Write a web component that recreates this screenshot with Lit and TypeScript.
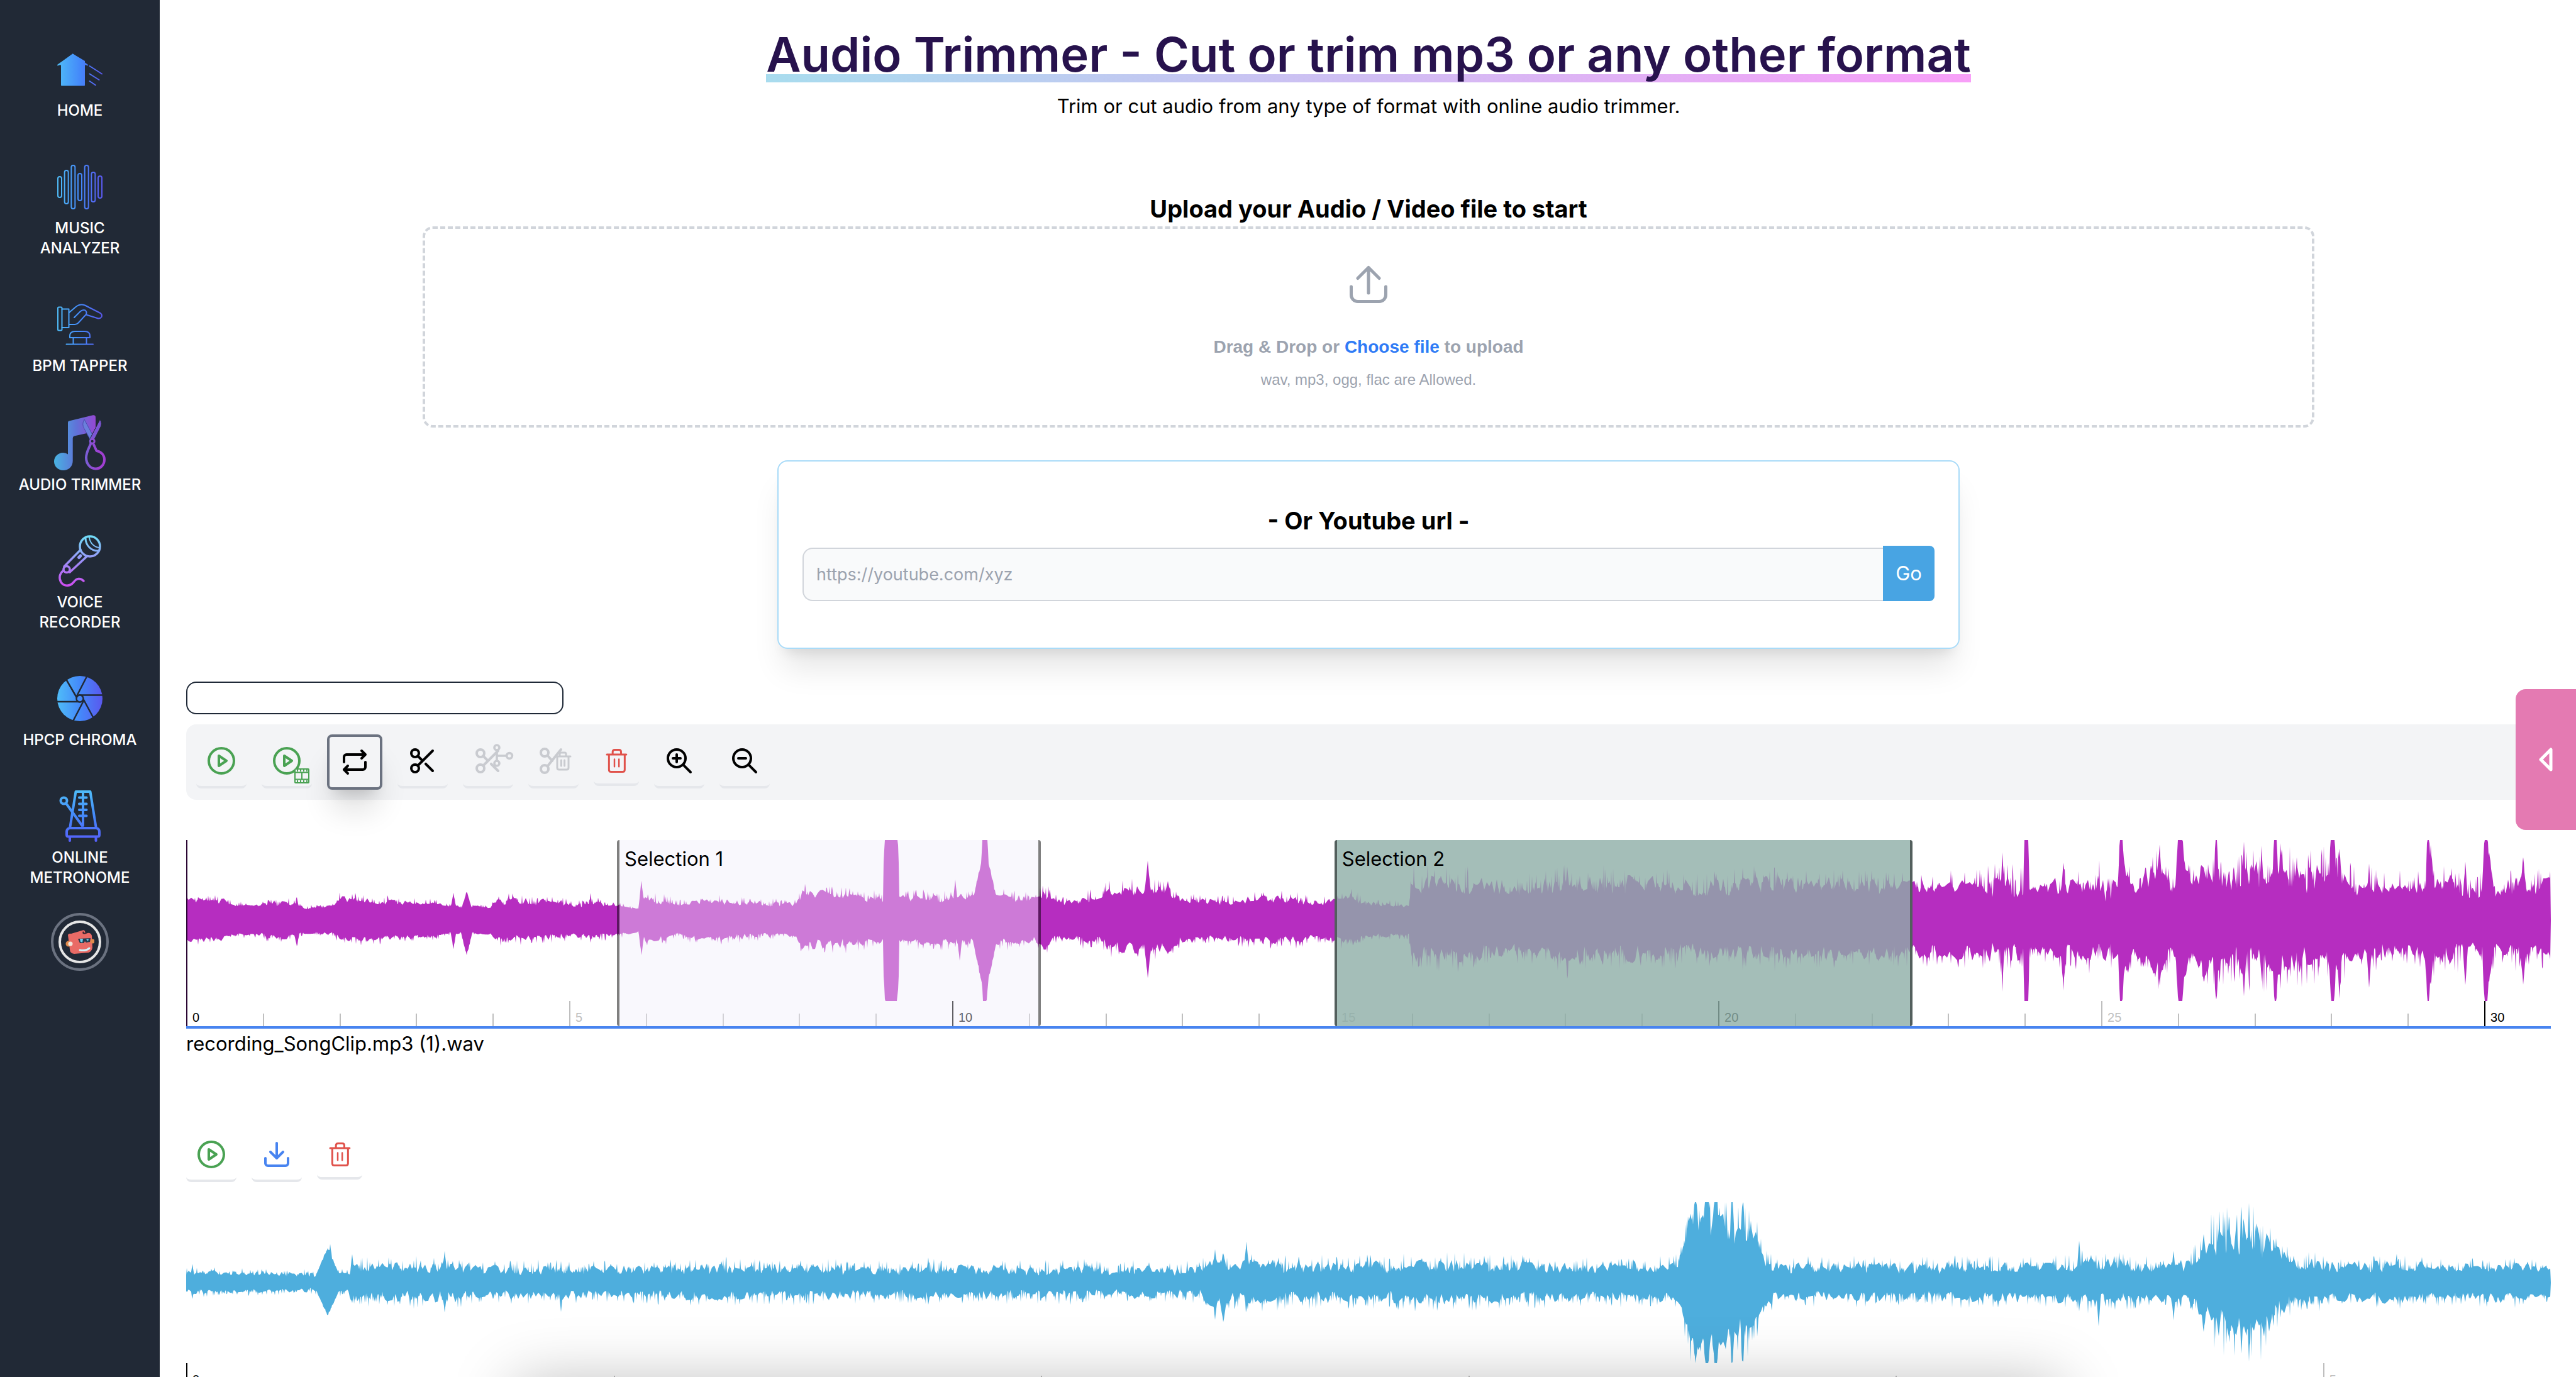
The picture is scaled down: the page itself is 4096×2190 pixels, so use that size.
import { LitElement, html, svg, css, nothing } from "lit";
import { customElement, property } from "lit/decorators.js";
import { classMap } from "lit/directives/class-map.js";

/* ---------- waveform data ---------- */

// [position, quiet level, peak level] on a 3760 x 256 grid, levels measured from the centre line
type Level = [number, number, number];
// [position, half width, height above centre, height below centre]
type Spike = [number, number, number, number];

interface Track {
  levels: Level[];
  spikes: Spike[];
  seed: number;
}

const GRID = 3760;
const HALF = 128;

const songTrack: Track = {
  seed: 11,
  levels: [
    [0, 28, 44], [60, 26, 40], [76, 21, 31], [120, 21, 29], [130, 23, 38], [176, 22, 36], [186, 18, 25],
    [236, 20, 28], [244, 27, 46], [320, 25, 40], [400, 23, 34], [420, 19, 28], [484, 19, 27], [492, 24, 44],
    [560, 24, 42], [620, 21, 34], [640, 22, 38], [676, 21, 34], [720, 16, 22], [730, 26, 46], [760, 24, 44],
    [780, 20, 34], [830, 26, 42], [900, 21, 38], [970, 20, 34], [975, 32, 60], [1040, 30, 58], [1110, 26, 46],
    [1140, 28, 48], [1215, 28, 52], [1254, 30, 48], [1290, 30, 54], [1350, 27, 44], [1366, 34, 62],
    [1380, 25, 42], [1418, 24, 36], [1426, 27, 52], [1456, 26, 46], [1464, 32, 66], [1520, 38, 68],
    [1562, 38, 64], [1580, 27, 46], [1640, 24, 40], [1700, 26, 48], [1770, 26, 48], [1790, 22, 36],
    [1826, 26, 44], [1850, 28, 54], [1880, 22, 36], [1944, 20, 32], [1949, 42, 90], [2040, 40, 88],
    [2120, 38, 74], [2200, 42, 94], [2330, 40, 88], [2410, 38, 78], [2520, 42, 90], [2600, 44, 84],
    [2743, 40, 78], [2800, 42, 80], [2860, 42, 84], [2880, 34, 98], [2915, 34, 90], [2938, 42, 60],
    [2970, 40, 84], [3015, 38, 86], [3045, 30, 98], [3072, 30, 86], [3088, 60, 104], [3098, 40, 60],
    [3110, 44, 106], [3138, 58, 128], [3158, 44, 64], [3172, 68, 128], [3190, 50, 84], [3210, 58, 126],
    [3240, 44, 110], [3270, 42, 118], [3300, 44, 124], [3320, 48, 118], [3345, 48, 122], [3370, 42, 112],
    [3400, 44, 120], [3424, 50, 110], [3450, 40, 88], [3500, 40, 84], [3555, 40, 80], [3575, 42, 98],
    [3600, 38, 96], [3625, 36, 80], [3640, 32, 66], [3666, 42, 98], [3676, 34, 64], [3700, 36, 90],
    [3730, 38, 82], [3760, 40, 88],
  ],
  spikes: [
    [176, 8, 38, 44], [425, 8, 46, 46], [446, 14, 48, 58], [643, 5, 46, 36], [724, 7, 66, 58], [1027, 8, 58, 44],
    [1121, 13, 240, 220], [1223, 7, 66, 44], [1230, 7, 42, 68], [1270, 26, 127, 127], [1270, 7, 180, 150],
    [1529, 10, 96, 95], [1561, 14, 66, 54], [2196, 7, 90, 94], [2888, 5, 114, 114], [2926, 5, 180, 180],
    [2985, 8, 96, 112], [3077, 5, 160, 150], [3080, 14, 110, 96], [3138, 7, 127, 112], [3171, 8, 160, 150],
    [3171, 16, 120, 112], [3228, 4, 140, 134], [3272, 7, 126, 126], [3300, 6, 124, 100], [3322, 5, 150, 140],
    [3322, 14, 118, 90], [3330, 6, 126, 110], [3413, 6, 170, 150], [3424, 7, 122, 126], [3471, 7, 92, 114],
    [3565, 4, 150, 150], [3569, 10, 122, 110], [3624, 7, 94, 106], [3657, 6, 160, 150], [3662, 14, 112, 100],
    [3716, 10, 104, 102],
  ],
};

const clipTrack: Track = {
  seed: 47,
  levels: [
    [0, 11, 26], [120, 11, 22], [205, 8, 22], [236, 13, 24], [258, 11, 22], [262, 13, 42], [420, 13, 46],
    [470, 12, 38], [700, 12, 36], [860, 13, 42], [1000, 12, 38], [1200, 12, 38], [1400, 11, 38], [1614, 11, 36],
    [1626, 16, 56], [1700, 16, 50], [1820, 14, 44], [1960, 14, 50], [2100, 14, 46], [2204, 14, 42],
    [2366, 15, 44], [2378, 28, 60], [2384, 58, 100], [2392, 74, 136], [2446, 66, 138], [2460, 44, 136],
    [2484, 48, 128], [2500, 36, 100], [2510, 22, 54], [2530, 14, 42], [2800, 14, 44], [2960, 15, 44],
    [3010, 17, 54], [3080, 17, 50], [3130, 13, 40], [3180, 17, 48], [3204, 30, 72], [3222, 36, 116],
    [3254, 34, 130], [3300, 32, 134], [3318, 32, 102], [3340, 22, 70], [3356, 17, 56], [3400, 15, 48],
    [3520, 16, 46], [3620, 16, 38], [3690, 17, 46], [3760, 16, 34],
  ],
  spikes: [
    [10, 5, 30, 26], [225, 24, 58, 54], [229, 8, 64, 46], [264, 5, 48, 34], [411, 6, 52, 48], [596, 5, 32, 48],
    [1180, 5, 40, 36], [1636, 7, 54, 60], [1649, 10, 50, 66], [1686, 7, 66, 44], [2400, 6, 140, 130],
    [2418, 7, 160, 150], [2432, 7, 150, 140], [2458, 4, 140, 136], [2475, 4, 136, 134], [3010, 5, 70, 46],
    [3041, 5, 40, 70], [3160, 5, 54, 62], [3208, 10, 78, 80], [3268, 5, 124, 120], [3280, 5, 127, 127],
  ],
};

function noise(seed: number): () => number {
  let s = seed * 7919;
  return () => {
    s = (s * 1664525 + 1013904223) % 4294967296;
    return s / 4294967296;
  };
}

const CREST = 4;

function edge(track: Track, side: 2 | 3): number[] {
  const rand = noise(track.seed + side);
  const gain = side === 2 ? 1 : 0.94;
  const out: number[] = [];
  let k = 0;
  let from = rand();
  let to = rand();
  for (let x = 0; x < GRID; x++) {
    while (k < track.levels.length - 2 && track.levels[k + 1][0] <= x) k++;
    if (x % CREST === 0) {
      from = to;
      to = rand();
    }
    const [x0, lo0, hi0] = track.levels[k];
    const [x1, lo1, hi1] = track.levels[k + 1];
    const t = (x - x0) / (x1 - x0);
    const lo = lo0 + (lo1 - lo0) * t;
    const hi = hi0 + (hi1 - hi0) * t;
    const r = rand();
    const crest = 0.65 * (from + ((to - from) * (x % CREST)) / CREST);
    let v = (lo + (hi - lo) * Math.max(crest, r * r * r * r)) * gain;
    for (const spike of track.spikes) {
      const d = Math.abs(x - spike[0]) / spike[1];
      const fall = spike[side] > HALF ? 1 - d * d * 0.7 : 1 - d;
      if (d < 1) v = Math.max(v, spike[side] * fall * (0.92 + r * 0.08));
    }
    out.push(Math.min(v, HALF));
  }
  return out;
}

function wavePath(track: Track): string {
  const up = edge(track, 2).map((v, x) => `${x} ${(HALF - v).toFixed(1)}`);
  const down = edge(track, 3).map((v, x) => `${x} ${(HALF + v).toFixed(1)}`).reverse();
  return `M0 ${HALF}L${up.join("L")}L${GRID} ${HALF}L${down.join("L")}Z`;
}

/* ---------- icons ---------- */

const sideGradient = (id: string, stops: string[], vertical = false) => svg`
  <defs>
    <linearGradient id=${id} gradientUnits="userSpaceOnUse" x1="0" y1="0" x2=${vertical ? 0 : 72} y2=${vertical ? 80 : 0}>
      ${stops.map((c, i) => svg`<stop offset=${i / (stops.length - 1)} stop-color=${c}></stop>`)}
    </linearGradient>
  </defs>`;
const blues = ["#4fbcf8", "#4489fa", "#5a58ee"];

const homeIcon = html`<svg class="icon" viewBox="0 0 72 72" width="72" height="72" aria-hidden="true">
  ${sideGradient("g-home", blues)}
  <g fill="url(#g-home)" stroke="url(#g-home)" stroke-width="2" stroke-linecap="round" stroke-linejoin="round">
    <path stroke="none" d="M6 27 24.700 11.500 44 23V61.500a1 1 0 0 1-1 1H7a1 1 0 0 1-1-1Z"></path>
    <path d="M1 29.500 24.700 12.500 48 29.500Z" fill="url(#g-home)" stroke="none"></path>
    <path fill="none" d="M1 29.500 24.700 12.500 48 29.500M51.500 31 71 43.500M51.500 43.500 66.500 53M51.500 55 61 61.500"></path>
  </g>
</svg>`;

const bars: [number, number][] = [[20, 53], [10, 63], [2, 71], [15, 58], [2, 71], [13, 60], [19, 54]];
const analyzerIcon = html`<svg class="icon" viewBox="0 0 72 72" width="72" height="72" aria-hidden="true">
  ${sideGradient("g-bars", blues)}
  <g fill="none" stroke="url(#g-bars)" stroke-width="2">
    ${bars.map(([a, b], i) => svg`<rect x=${1 + i * 10.67} y=${a} width="6" height=${b - a} rx="3"></rect>`)}
  </g>
</svg>`;

const tapperIcon = html`<svg class="icon" viewBox="0 0 72 72" width="72" height="72" aria-hidden="true">
  ${sideGradient("g-tap", blues)}
  <g fill="none" stroke="url(#g-tap)" stroke-width="2" stroke-linecap="round" stroke-linejoin="round">
    <rect x="1" y="8.500" width="6.500" height="37" rx="1.500"></rect>
    <path d="M7.500 11.500H18.500V41H7.500"></path>
    <path d="M19 17 29 8.500Q36 2.500 44 5.500L68.500 18Q72 20.500 70.500 24 68 27.500 63.500 26L46 20.500"></path>
    <path d="M27 25 36.500 15.500Q40.500 12 44.500 13.500 48 16.500 45.500 20.500L33.500 33.500Q31 36 28 36H19"></path>
    <path d="M20 57V54.500Q20 47 28 47H44Q52 47 52 54.500V57ZM25.500 57V67M46.500 57V67M14.500 67.500H57"></path>
  </g>
</svg>`;

const trimmerIcon = html`<svg class="icon" viewBox="0 0 82 88" width="82" height="88" aria-hidden="true">
  ${sideGradient("g-trim", ["#48b3e2", "#6072d8", "#a03fd2"])}
  <path fill="url(#g-trim)" d="M22 12Q22 10 24 9.600L62 .3Q66 0 66 4V25L61 30 52 29 32 33.500Q29.700 34 29.700 37V73C29.700 82 23 88 14.500 88 6 88 0 81.500 0 74S6 60 14.500 60Q19 60 22 62.500Z"></path>
  <path fill="#6b7fdc" stroke="#4a4fae" stroke-width="1" d="M48 7Q43.500 15 48 22L58 40 64 37Z"></path>
  <path fill="#7c55d4" stroke="#212936" stroke-width="1" d="M73 7Q77.500 14 73 21L63.500 40 57.500 37Z"></path>
  <g fill="none" stroke="url(#g-trim)" stroke-width="4" stroke-linejoin="round">
    <path d="M58.500 45C56 52 51 59 51 68 51 78 58 85.500 66 85.500S80 79 80 71 74 58 67.500 57L62.500 46"></path>
    <circle cx="60.700" cy="41.700" r="3.500" stroke-width="3" fill="#212936"></circle>
  </g>
</svg>`;

const micIcon = html`<svg class="icon" viewBox="0 0 68 82" width="68" height="82" aria-hidden="true">
  ${sideGradient("g-mic", ["#6fe0f8", "#9a92f8", "#cc4ef0"], true)}
  <g fill="none" stroke="url(#g-mic)" stroke-width="3.500" stroke-linecap="round" stroke-linejoin="round">
    <circle cx="50" cy="18" r="16"></circle>
    <path d="M43 5C43 16 52 26 64 25" stroke-width="3"></path>
    <path d="M49 4C50 12 56 19 65 20" stroke-width="2"></path>
    <path d="M35 23.500 9 50M45.500 33.500 18 59"></path>
    <circle cx="13" cy="54.500" r="5"></circle>
    <path d="M32.500 35.500 35 33" stroke-width="5"></path>
    <path d="M8 56C2 61 0 68 4 75 9 82 18 82 24 75 29 68 35 68 40 73"></path>
  </g>
</svg>`;

const chromaIcon = html`<svg class="icon" viewBox="0 0 72 72" width="72" height="72" aria-hidden="true">
  ${sideGradient("g-chroma", blues)}
  <circle cx="36" cy="36" r="36" fill="url(#g-chroma)"></circle>
  <g stroke="#212936" stroke-width="2.500" fill="none">
    <path d="M14.500 6 31 34.500M47.500 0 30.500 33M73 30.500H34M58 67.500 41 36M25 72 42.500 38.500M-1 41H38"></path>
    <circle cx="36" cy="36" r="5.500" fill="url(#g-chroma)"></circle>
  </g>
</svg>`;

const metronomeIcon = html`<svg class="icon" viewBox="0 0 66 82" width="66" height="82" aria-hidden="true">
  ${sideGradient("g-metro", ["#4fbcf8", "#4489fa", "#5560f8"], true)}
  <g fill="none" stroke="url(#g-metro)" stroke-width="4" stroke-linejoin="round" stroke-linecap="round">
    <path d="M17.500 58 26.500 2H49.500L58.500 58M38 3V56M12 22 36.500 56"></path>
    <path d="M32 11.500H43.500M32 21.500H43.500M32 31H43.500M32 40.500H43.500"></path>
    <path d="M17 60H59Q64 61 64 66V71Q64 73.500 61 73.500H15Q12 73.500 12 71V66Q12 61 17 60ZM17 75V80M58.500 75V80"></path>
    <circle cx="7.500" cy="16.500" r="5"></circle>
  </g>
</svg>`;

const avatarArt = html`<svg viewBox="0 0 46 38" width="46" height="38" aria-hidden="true">
  <path fill="#e96b66" d="M4 8Q5 5 9 6L26 1Q30-1 31 2 32 7 35 5 40 4 42 9L43 28Q42 34 37 36L14 38Q7 37 7 31Z"></path>
  <circle cx="5" cy="22" r="4.500" fill="#e28b4c"></circle>
  <circle cx="8" cy="22" r="3.500" fill="#f2e5dc"></circle>
  <circle cx="43" cy="18" r="3.500" fill="#e28b4c"></circle>
  <path fill="#263a4d" d="M20 14 40 13 39 19 33 20 31 18 29 21 23 21Z"></path>
  <path fill="#6fd0ee" d="M23 14 28 14 27 20 24 19ZM33 15 37 14 36 18Z"></path>
  <path fill="#3b2430" d="M27 5Q30 8 34 5L33 2 31 5 28 2Z"></path>
  <path fill="none" stroke="#d5f3fb" stroke-width="3" stroke-linecap="round" d="M23 32Q32 34 38 29"></path>
</svg>`;

const glyph = (body: unknown, size = 48) => html`<svg class="icon" viewBox="0 0 24 24" width=${size} height=${size}
  fill="none" stroke="currentColor" stroke-width="2" stroke-linecap="round" stroke-linejoin="round" aria-hidden="true">${body}</svg>`;

const playBody = svg`<circle cx="12" cy="12" r="10"></circle><path d="M10 8 16 12 10 16Z"></path>`;
const scissorsBody = svg`<circle cx="6" cy="6" r="3"></circle><circle cx="6" cy="18" r="3"></circle>`;
const playIcon = glyph(playBody);
const repeatIcon = glyph(svg`<path d="M3.500 12V8A2 2 0 0 1 5.500 6H20M17.500 3 20.500 6 17.500 9M20.500 12V16A2 2 0 0 1 18.500 18H4M6.500 15 3.500 18 6.500 21"></path>`);
const cutIcon = glyph(svg`${scissorsBody}<path d="M20 4 8.120 15.880M14.470 14.480 20 20M8.120 8.120 12 12"></path>`);
const splitIcon = glyph(svg`${scissorsBody}<path d="M20 4 8.120 15.880M14.470 14.480 20 20M8.120 8.120 12 12"></path>
  <g stroke-width="1.800"><circle cx="19" cy="1.500" r="2"></circle><circle cx="29" cy="8" r="2.200"></circle><circle cx="19" cy="14" r="2"></circle><path d="M19 3.500V12M20 8H26.800"></path></g>`);
const cutDeleteIcon = glyph(svg`<circle cx="5" cy="5.500" r="3"></circle><circle cx="5" cy="18.500" r="3"></circle><path d="M18 3 7.500 16M7.500 8 11 12"></path>
  <g stroke-width="1.500"><path d="M13.500 8.500H25.500M15 9V17.500Q15 19 16.500 19H22.500Q24 19 24 17.500V9M17 8V6.500Q17 5.500 18 5.500H21Q22 5.500 22 6.500V8M18.200 11.500V16M20.800 11.500V16"></path></g>`);
const trashIcon = glyph(svg`<path stroke-width="1.800" d="M3 6H21.500M5 6V20.500Q5 22.500 7 22.500H18Q20 22.500 20 20.500V6M8.500 6V3.500Q8.500 1.500 10.500 1.500H14.500Q16.500 1.500 16.500 3.500V6"></path><path stroke-width="1.500" d="M10.200 10.500V17.500M14.500 10.500V17.500"></path>`, 40);
const zoomInIcon = glyph(svg`<circle cx="10" cy="10" r="7"></circle><path d="M15.200 15.200 21 21M7 10H13M10 7V13"></path>`);
const zoomOutIcon = glyph(svg`<circle cx="10" cy="10" r="7"></circle><path d="M15.200 15.200 21 21M7 10H13"></path>`);
const downloadIcon = glyph(svg`<path d="M12 3V14.500M7 10 12 15 17 10M3 15V19A2 2 0 0 0 5 21H19A2 2 0 0 0 21 19V15"></path>`);
const filmBadge = html`<svg class="badge" viewBox="0 0 24 24" width="24" height="24" fill="none" stroke="currentColor" stroke-width="2" aria-hidden="true">
  <rect x="1" y="1" width="22" height="22" rx="1"></rect>
  <path d="M1 6.500H23M1 17.500H23M12 6V18"></path>
  <path d="M4 3.500H22M4 20.500H22" stroke-width="3" stroke-dasharray="2 3"></path>
</svg>`;

/* ---------- waveform element ---------- */

interface Region {
  label: string;
  from: number;
  to: number;
  tone: "light" | "sage";
}

@customElement("wave-track")
export class WaveTrack extends LitElement {
  @property({ attribute: false }) track: Track = songTrack;
  @property({ attribute: false }) regions: Region[] = [];
  @property({ type: Number }) duration = 30;
  @property({ type: Boolean }) cursor = false;

  static styles = css`
    :host { display: block; position: relative; }
    .wave { display: block; width: 100%; height: 256px; fill: currentColor; }
    .ruler { position: relative; height: 40px; overflow: hidden; }
    .tick {
      position: absolute; bottom: 0; height: 20px; border-left: 2px solid #bfbfbf;
      box-sizing: border-box; color: #bfbfbf;
      font: 20px/24px "Liberation Sans", Arial, sans-serif;
    }
    .tick.labelled { height: 40px; padding: 14px 0 0 8px; }
    .tick.main { border-color: #000; color: #000; }
    .cursor { position: absolute; left: 0; top: 0; bottom: 0; width: 2px; background: #2b0633; }
    .region {
      position: absolute; top: 0; bottom: 0; box-sizing: border-box; padding: 6px 8px;
      border: solid rgba(0, 0, 0, 0.5); border-width: 0 4px; border-radius: 4px;
      background-clip: padding-box; color: #000; font-size: 31px; line-height: 48px;
    }
    .light { background-color: rgba(240, 238, 250, 0.4); }
    .sage { background-color: rgba(141, 174, 166, 0.8); border-color: #535f5d; }
  `;

  render() {
    const seconds = Array.from({ length: Math.floor(this.duration) + 1 }, (_, i) => i);
    const pct = (t: number) => `${(t / this.duration) * 100}%`;
    return html`
      <svg class="wave" viewBox="0 0 ${GRID} ${HALF * 2}" preserveAspectRatio="none" role="img" aria-label="Waveform">
        <path d=${wavePath(this.track)}></path>
      </svg>
      <div class="ruler">
        ${seconds.map((s) => html`<span
          class=${classMap({ tick: true, labelled: s % 5 === 0, main: s % 10 === 0 })}
          style="left:${pct(s)}">${s % 5 === 0 ? s : nothing}</span>`)}
      </div>
      ${this.cursor ? html`<div class="cursor"></div>` : nothing}
      ${this.regions.map((r) => html`<div class="region ${r.tone}"
        style="left:${pct(r.from)};width:${pct(r.to - r.from)}">${r.label}</div>`)}
    `;
  }
}

/* ---------- page ---------- */

const navItems = [
  { label: "HOME", icon: homeIcon, cls: "" },
  { label: "MUSIC ANALYZER", icon: analyzerIcon, cls: "stacked" },
  { label: "BPM TAPPER", icon: tapperIcon, cls: "" },
  { label: "AUDIO TRIMMER", icon: trimmerIcon, cls: "tall" },
  { label: "VOICE RECORDER", icon: micIcon, cls: "stacked" },
  { label: "HPCP CHROMA", icon: chromaIcon, cls: "" },
  { label: "ONLINE METRONOME", icon: metronomeIcon, cls: "stacked" },
];

const tools = [
  { label: "Play", icon: playIcon, cls: "green" },
  { label: "Play selection", icon: html`${playIcon}${filmBadge}`, cls: "green" },
  { label: "Loop", icon: repeatIcon, cls: "active" },
  { label: "Cut", icon: cutIcon, cls: "" },
  { label: "Split", icon: splitIcon, cls: "off" },
  { label: "Cut and delete", icon: cutDeleteIcon, cls: "off" },
  { label: "Delete", icon: trashIcon, cls: "red" },
  { label: "Zoom in", icon: zoomInIcon, cls: "" },
  { label: "Zoom out", icon: zoomOutIcon, cls: "" },
];

const clipTools = [
  { label: "Play clip", icon: playIcon, cls: "green" },
  { label: "Download clip", icon: downloadIcon, cls: "blue" },
  { label: "Delete clip", icon: trashIcon, cls: "red" },
];

const selections: Region[] = [
  { label: "Selection 1", from: 5.624, to: 11.157, tone: "light" },
  { label: "Selection 2", from: 14.99, to: 22.54, tone: "sage" },
];

@customElement("app-root")
export class AppRoot extends LitElement {
  static styles = css`
    :host { display: block; font-family: Inter, "Liberation Sans", sans-serif; font-size: 31px; line-height: 48px; color: #000; }
    * { box-sizing: border-box; }
    .shell { position: relative; display: flex; height: 100vh; overflow: hidden; background: #fff; }
    .sidebar { flex: none; width: 254px; padding-top: 74px; background: #212936; display: flex; flex-direction: column; align-items: center; }
    .nav { display: flex; flex-direction: column; align-items: center; gap: 69px; }
    .nav-link { display: flex; flex-direction: column; align-items: center; gap: 14px; width: 200px; color: #fff; text-decoration: none; text-align: center; font-size: 24px; font-weight: 500; line-height: 32px; }
    .nav-art { display: flex; align-items: center; justify-content: center; height: 72px; }
    .tall .nav-art { height: 74px; }
    .nav-text { white-space: nowrap; }
    .stacked .nav-text { width: min-content; white-space: normal; }
    .nav-link .icon { flex: none; overflow: visible; }
    .avatar { flex: none; margin-top: 40px; width: 92px; height: 92px; padding: 8px; border: 4px solid #6b7280; border-radius: 50%; background: none; }
    .avatar-ring { display: flex; align-items: center; justify-content: center; width: 68px; height: 68px; margin: auto; border: 4px solid #e5e5e5; border-radius: 50%; }
    .main { flex: 1; min-width: 0; padding: 37px 40px 0 42px; display: flex; flex-direction: column; }
    .main > * { flex: none; }
    h1, h2, p { margin: 0; text-align: center; }
    h1 { font-size: 76px; line-height: 98px; font-weight: 600; color: #27124d; }
    .underlined { background: linear-gradient(120deg, #a8dcee 0%, #f89ff8 100%) no-repeat 0 calc(100% - 1px) / 100% 13px; }
    .lead { margin-top: 10px; }
    h2 { font-size: 38px; line-height: 56px; font-weight: 700; }
    .upload-title { margin-top: 111px; }
    .drop { align-self: center; width: 80%; padding: 58px 0 56px; border: 4px dashed #d1d5db; border-radius: 16px; display: flex; flex-direction: column; align-items: center; color: #9ca3af; font-family: "Liberation Sans", Arial, sans-serif; }
    .drop-line { margin-top: 50px; font-size: 28px; line-height: 40px; font-weight: 700; }
    .choose { color: #2f7bf6; cursor: pointer; }
    .file { position: absolute; width: 1px; height: 1px; opacity: 0; }
    .hint { margin-top: 16px; font-size: 24px; line-height: 32px; }
    .card { align-self: center; width: 50%; margin-top: 52px; padding: 66px 38px 74px; border: 2px solid #a9dbf8; border-radius: 16px; box-shadow: 0 40px 50px -10px rgba(0, 0, 0, 0.1), 0 16px 20px -12px rgba(0, 0, 0, 0.1); }
    .url-row { display: flex; align-items: flex-end; margin-top: 12px; }
    .url { flex: 1; min-width: 0; height: 85px; padding: 0 20px; border: 2px solid #d1d5db; border-right: 0; border-radius: 16px 0 0 16px; background: #f9fafb; font: 27px/40px Inter, sans-serif; }
    .url::placeholder { color: #9ca3af; opacity: 1; }
    .go { width: 82px; height: 88px; padding: 0; border: 0; border-radius: 0 8px 8px 0; background: #48a4e3; color: #fff; font: 31px/48px Inter, sans-serif; }
    .name { width: 600px; max-width: 100%; height: 52px; margin-top: 52px; padding: 0 16px; border: 2px solid #1f2937; border-radius: 16px; background: #fff; font: 27px/40px Inter, sans-serif; }
    .toolbar { display: flex; align-items: center; gap: 24px; }
    .editor-tools { margin-top: 16px; padding: 16px; min-height: 120px; border-radius: 16px; background: #f3f4f6; }
    .clip-tools { margin-top: 112px; }
    .tool { position: relative; display: block; padding: 16px; border: 0 solid #e5e7eb; border-bottom-width: 4px; border-radius: 8px; background: none; color: #000; }
    .tool .icon { display: block; overflow: visible; }
    .tool.green { color: #4aa253; }
    .tool.red { color: #e0524b; }
    .tool.blue { color: #4884f0; }
    .tool.off { color: #c9cbd0; }
    .tool.active { border: 4px solid #6b7280; box-shadow: 0 40px 50px -10px rgba(0, 0, 0, 0.14), 0 16px 20px -12px rgba(0, 0, 0, 0.14); }
    .badge { position: absolute; right: 4px; bottom: 4px; background: #f3f4f6; }
    .song { margin-top: 64px; color: #b62dc0; border-bottom: 4px solid #4884f0; }
    .clip { margin-top: 32px; color: #4eaedd; }
    .drawer { position: absolute; right: 0; top: 1096px; width: 96px; height: 224px; padding: 0; border: 0; border-radius: 16px 0 0 16px; background: #e47ab2; color: #fff; }
    .drawer svg { display: block; margin: auto; }
    .dock-shadow { position: absolute; left: 20%; right: 20%; bottom: -110px; height: 100px; pointer-events: none; box-shadow: 0 0 100px rgba(0, 0, 0, 0.28); }
  `;

  private renderTool = (t: { label: string; icon: unknown; cls: string }) => html`
    <button class="tool ${t.cls}" type="button" aria-label=${t.label} ?disabled=${t.cls === "off"}>${t.icon}</button>`;

  render() {
    return html`
      <div class="shell">
        <aside class="sidebar">
          <nav class="nav">
            ${navItems.map((n) => html`<a class="nav-link ${n.cls}" href="#">
              <span class="nav-art">${n.icon}</span>
              <span class="nav-text">${n.label}</span>
            </a>`)}
          </nav>
          <button class="avatar" type="button" aria-label="Account"><span class="avatar-ring">${avatarArt}</span></button>
        </aside>
        <main class="main">
          <h1><span class="underlined">Audio Trimmer - Cut or trim mp3 or any other format</span></h1>
          <p class="lead">Trim or cut audio from any type of format with online audio trimmer.</p>
          <h2 class="upload-title">Upload your Audio / Video file to start</h2>
          <div class="drop">
            <svg viewBox="0 0 60 60" width="60" height="60" fill="none" stroke="currentColor" stroke-width="5" stroke-linecap="round" stroke-linejoin="round" aria-hidden="true">
              <path d="M2.500 34V47A10.500 10.500 0 0 0 13 57.500H47A10.500 10.500 0 0 0 57.500 47V34M30 3.500V44M13 20.500 30 3.500 47 20.500"></path>
            </svg>
            <p class="drop-line">Drag &amp; Drop or <label class="choose" for="file">Choose file</label> to upload</p>
            <input class="file" id="file" type="file" accept="audio/*,video/*" />
            <p class="hint">wav, mp3, ogg, flac are Allowed.</p>
          </div>
          <section class="card">
            <h2>- Or Youtube url -</h2>
            <div class="url-row">
              <input class="url" type="url" aria-label="Youtube url" placeholder="https://youtube.com/xyz" />
              <button class="go" type="button">Go</button>
            </div>
          </section>
          <input class="name" type="text" aria-label="Name" />
          <div class="toolbar editor-tools">${tools.map(this.renderTool)}</div>
          <wave-track class="song" .track=${songTrack} .regions=${selections} .duration=${30.87} cursor></wave-track>
          <div>recording_SongClip.mp3 (1).wav</div>
          <div class="toolbar clip-tools">${clipTools.map(this.renderTool)}</div>
          <wave-track class="clip" .track=${clipTrack} .duration=${5.533}></wave-track>
        </main>
        <button class="drawer" type="button" aria-label="Open panel">
          <svg viewBox="0 0 22 38" width="22" height="38" fill="none" stroke="currentColor" stroke-width="5" stroke-linejoin="round" aria-hidden="true"><path d="M3 19 19 3V35Z"></path></svg>
        </button>
        <div class="dock-shadow"></div>
      </div>
    `;
  }
}
